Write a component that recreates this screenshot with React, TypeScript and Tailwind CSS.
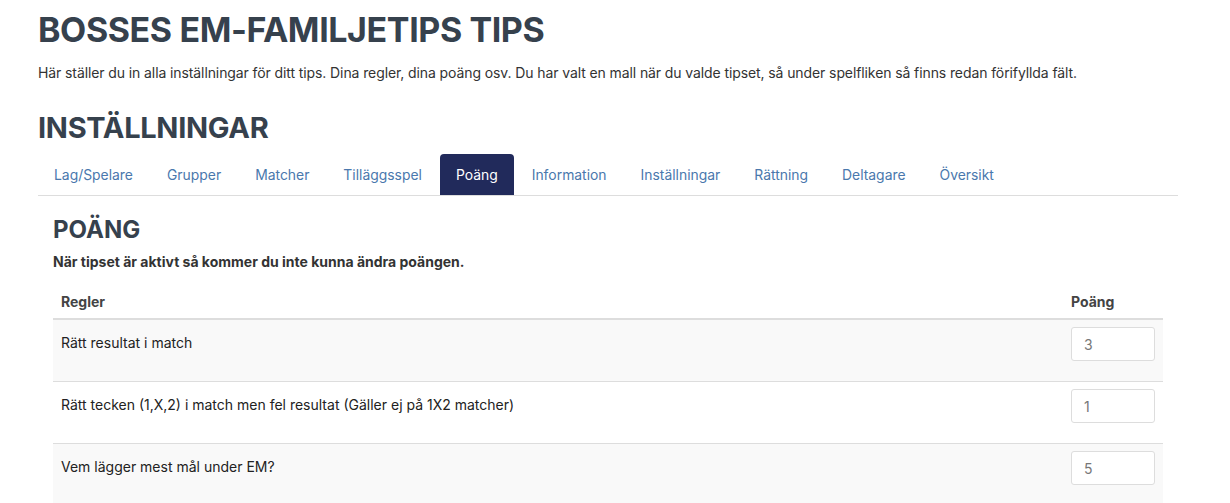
export default function App() {
  const tabs = [
    "Lag/Spelare",
    "Grupper",
    "Matcher",
    "Tilläggsspel",
    "Poäng",
    "Information",
    "Inställningar",
    "Rättning",
    "Deltagare",
    "Översikt",
  ];
  const rows = [
    { label: "Rätt resultat i match", value: "3" },
    { label: "Rätt tecken (1,X,2) i match men fel resultat (Gäller ej på 1X2 matcher)", value: "1" },
    { label: "Vem lägger mest mål under EM?", value: "5" },
  ];
  return (
    <div className="min-h-screen bg-white font-[Inter,'Liberation_Sans',sans-serif] text-[#333]">
      <div className="ml-[38px] w-[1140px]">
        <h1 className="pt-[10px] text-[34px] leading-[40px] font-bold tracking-[-0.4px] text-[#36414d]">
          BOSSES EM-FAMILJETIPS TIPS
        </h1>
        <p className="mt-[13px] text-[14px] leading-[20px] tracking-[-0.1px] text-[#333]">
          Här ställer du in alla inställningar för ditt tips. Dina regler, dina poäng osv. Du har valt en mall när du valde tipset, så under spelfliken så finns redan förifyllda fält.
        </p>
        <h2 className="mt-[28px] text-[29px] leading-[34px] font-bold tracking-[-0.3px] text-[#36414d]">
          INSTÄLLNINGAR
        </h2>
        <div className="mt-[9px] flex border-b border-[#ddd]">
          {tabs.map((t) => (
            <div
              key={t}
              className={
                t === "Poäng"
                  ? "mr-[2px] flex h-[41px] items-center rounded-t-[4px] bg-[#212a5b] px-[16px] pt-[2px] text-[13.9px] text-white"
                  : "mr-[2px] flex h-[41px] items-center px-[16px] pt-[2px] text-[13.9px] text-[#4a78ad]"
              }
            >
              {t}
            </div>
          ))}
        </div>
        <div className="px-[15px]">
          <h3 className="mt-[19px] text-[24px] leading-[30px] font-bold text-[#36414d]">POÄNG</h3>
          <p className="mt-[7px] text-[14px] leading-[20px] font-bold text-[#333]">
            När tipset är aktivt så kommer du inte kunna ändra poängen.
          </p>
          <div className="mt-[12px] w-[1110px]">
            <div className="flex h-[36px] items-center border-b-2 border-[#ddd] text-[14px] font-bold text-[#444]">
              <div className="flex-1 pl-[8px]">Regler</div>
              <div className="w-[100px] pl-[8px]">Poäng</div>
            </div>
            {rows.map((r, i) => (
              <div
                key={r.label}
                className={
                  i % 2 === 0
                    ? "flex h-[62px] border-b border-[#ddd] bg-[#f9f9f9] text-[14px]"
                    : "flex h-[62px] border-b border-[#ddd] bg-white text-[14px]"
                }
              >
                <div className="flex-1 pl-[8px] pt-[13px] leading-[20px] text-[#222]">{r.label}</div>
                <div className="w-[100px] pl-[8px] pt-[7px]">
                  <div className="flex h-[34px] w-[84px] items-center rounded-[3px] border border-[#ddd] bg-white pl-[12px] text-[14px] text-[#777]">
                    {r.value}
                  </div>
                </div>
              </div>
            ))}
          </div>
        </div>
      </div>
    </div>
  );
}
